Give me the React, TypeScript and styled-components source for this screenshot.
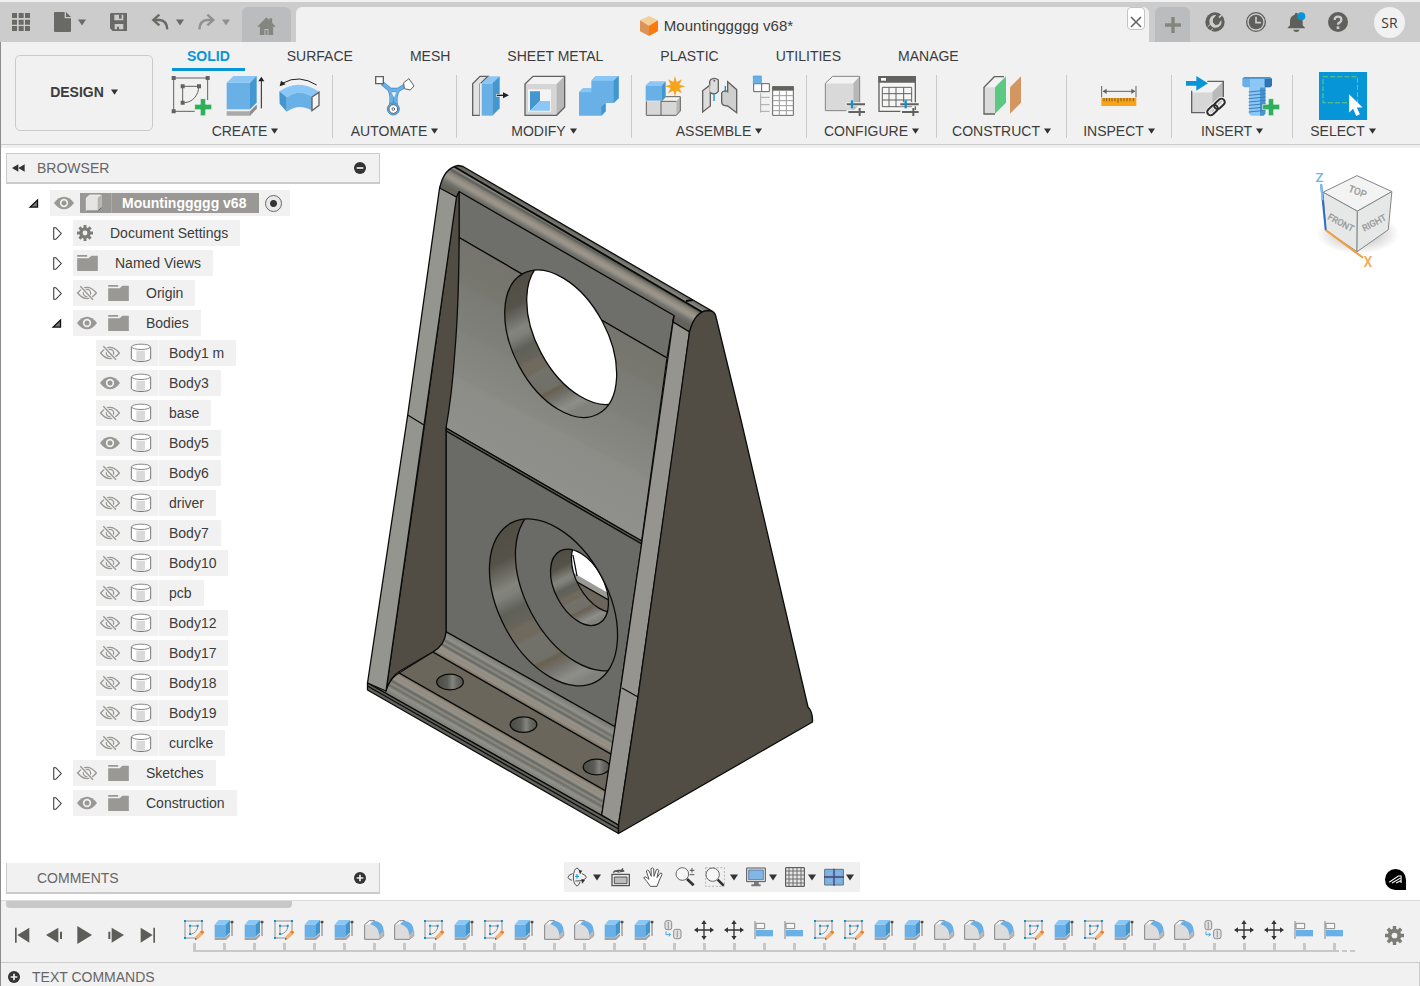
import React from "react";
import styled, { createGlobalStyle, css } from "styled-components";

const color = {
  chrome: "#f1f1f1",
  bar: "#cccccc",
  tab: "#bbbcbe",
  line: "#cbcbcb",
  icon: "#696965",
  text: "#3c3c3c",
  muted: "#666666",
  accent: "#0696d7",
  blue: "#69b0e6",
  blueTop: "#8ac6f6",
  blueSide: "#4297d1",
  edge: "#62625e",
};

const GlobalStyle = createGlobalStyle`
  * { box-sizing: border-box; }
  body {
    margin: 0;
    background: #ffffff;
    color: ${color.text};
    font: 14px/18px "Liberation Sans", Arial, sans-serif;
  }
  button { font: inherit; color: inherit; background: none; border: 0; padding: 0; margin: 0; cursor: pointer; }
  ul, ol { list-style: none; margin: 0; padding: 0; }
  svg { display: block; flex: none; overflow: visible; }
`;

/* ---------- layout ---------- */

const Page = styled.div`
  min-height: 100vh;
  display: flex;
  flex-direction: column;
`;

const TitleBar = styled.header`
  display: flex;
  align-items: flex-end;
  height: 42px;
  border-top: 2px solid ${color.chrome};
  background: ${color.bar};
`;

const QuickTools = styled.div`
  display: flex;
  align-items: center;
  align-self: stretch;
  gap: 24px;
  width: 242px;
  padding-left: 12px;
  color: ${color.icon};
`;

const History = styled.div`
  display: flex;
  gap: 14px;
`;

const ToolButton = styled.button<{ $dim?: boolean }>`
  display: flex;
  align-items: center;
  gap: 6px;
  opacity: ${(p) => (p.$dim ? 0.6 : 1)};
`;

const SideTab = styled.button<{ $width: number }>`
  display: flex;
  align-items: center;
  justify-content: center;
  flex: none;
  width: ${(p) => p.$width}px;
  height: 35px;
  border-radius: 6px 6px 0 0;
  background: ${color.tab};
  color: #85857f;
`;

const DocumentTab = styled.div`
  display: flex;
  flex: 1;
  height: 35px;
  margin: 0 6px 0 5px;
  padding: 0 4px 0 10px;
  border-radius: 6px 6px 0 0;
  background: ${color.chrome};
`;

const DocumentTitle = styled.h1`
  flex: 1;
  display: flex;
  align-items: center;
  justify-content: center;
  gap: 6px;
  margin: 0;
  padding-top: 3px;
  font-size: 15px;
  font-weight: 400;
`;

const CloseButton = styled.button`
  display: flex;
  align-items: flex-end;
  justify-content: center;
  width: 18px;
  height: 23px;
  border: 1px solid #c4c4c4;
  border-radius: 4px;
  background: #ffffff;
`;

const AccountTools = styled.div`
  display: flex;
  align-items: center;
  align-self: stretch;
  gap: 21px;
  padding: 0 15px;
  color: #5f5f5c;
`;

const Avatar = styled.button`
  width: 31px;
  height: 31px;
  margin-left: 5px;
  border-radius: 50%;
  background: ${color.chrome};
  color: ${color.text};
  font: 14px/31px "Open Sans", "Liberation Sans", sans-serif;
`;

const Workspace = styled.div`
  flex: 1;
  display: flex;
  flex-direction: column;
  border-left: 1px solid #8c8c8c;
`;

const Ribbon = styled.section`
  display: flex;
  gap: 5px;
  padding: 0 0 4px 14px;
  background: ${color.chrome};
  border-bottom: 1px solid ${color.line};
  box-shadow: 0 3px 0 ${color.chrome};
  margin-bottom: 3px;
`;

const WorkspaceButton = styled.button`
  display: flex;
  align-items: center;
  justify-content: center;
  gap: 7px;
  width: 138px;
  height: 76px;
  margin-top: 13px;
  padding-bottom: 2px;
  border: 1px solid #c9cacb;
  border-radius: 5px;
  font-weight: 700;
`;

const TabRow = styled.nav`
  display: flex;
  gap: 27px;
  padding-left: 14px;
  margin-bottom: 1px;
`;

const TabButton = styled.button<{ $active?: boolean }>`
  height: 29px;
  padding: 2px 15px 0;
  border-bottom: 3px solid ${(p) => (p.$active ? color.accent : "transparent")};
  color: ${(p) => (p.$active ? color.accent : color.text)};
  font-weight: ${(p) => (p.$active ? 700 : 400)};
`;

const Groups = styled.div`
  display: flex;
`;

const Group = styled.div<{ $width: number }>`
  display: flex;
  flex-direction: column;
  align-items: center;
  gap: 2px;
  width: ${(p) => p.$width}px;
`;

const CommandRow = styled.div`
  display: flex;
`;

const CommandButton = styled.button`
  display: flex;
  align-items: center;
  justify-content: center;
  width: 54px;
  height: 48px;
`;

const GroupMenu = styled.button`
  display: flex;
  align-items: center;
  gap: 4px;
`;

const Divider = styled.div`
  width: 1px;
  margin: 3px 0 2px;
  background: #c9c9c9;
`;

const Stage = styled.main`
  flex: 1;
  display: grid;
  grid-template: 1fr / 1fr;
  background: #ffffff;
  > * { grid-area: 1 / 1; }
`;

const Viewport = styled.div`
  padding: 16px 0 0 365px;
`;

const Sidebar = styled.aside`
  z-index: 1;
  display: flex;
  flex-direction: column;
  justify-content: space-between;
  justify-self: start;
  padding: 5px 0 6px 5px;
`;

const Panel = styled.section`
  width: 374px;
`;

const PanelHeader = styled.header<{ $open?: boolean }>`
  display: grid;
  grid-template-columns: 13px 1fr 13px;
  align-items: center;
  gap: 12px;
  height: 31px;
  padding: 0 12px 0 5px;
  border: solid ${color.line};
  border-width: ${(p) => (p.$open ? "1px 1px 2px" : "0 1px 2px")};
  background: ${color.chrome};
  color: ${color.muted};
  h2 { margin: 0; font-size: 14px; font-weight: 400; grid-column: 2; }
`;

const Tree = styled.ul`
  display: flex;
  flex-direction: column;
  gap: 4px;
  margin-top: 6px;
`;

const TreeRow = styled.li<{ $level: number }>`
  display: flex;
  align-items: center;
  height: 26px;
  padding-left: ${(p) => [21, 44, 67][p.$level]}px;
`;

const Toggle = styled.button`
  display: flex;
  justify-content: center;
  width: 14px;
  margin-right: 9px;
`;

const Spacer = styled.span`
  width: 23px;
`;

const Chip = styled.div<{ $tight?: boolean }>`
  display: flex;
  align-items: center;
  gap: 11px;
  height: 26px;
  padding: 0 12px 0 4px;
  background: ${color.chrome};
  ${(p) => p.$tight && css`gap: 6px; padding-right: 8px;`}
`;

const ChipLabel = styled.span<{ $inset: number }>`
  padding-left: ${(p) => p.$inset}px;
  white-space: nowrap;
`;

const BodyLabel = styled(ChipLabel)`
  margin-left: -4px;
  border-left: 1px solid #f9f9f9;
  line-height: 26px;
`;

const RootName = styled.div`
  display: flex;
  align-items: center;
  gap: 8px;
  height: 20px;
  padding: 0 13px 0 5px;
  background: #999894;
  color: #ffffff;
  font-weight: 700;
  span { padding-left: 10px; border-left: 1px solid #acaba8; line-height: 20px; }
`;

const Activate = styled.input`
  appearance: none;
  width: 17px;
  height: 17px;
  margin: 0;
  border: 1px solid #666666;
  border-radius: 50%;
  background: radial-gradient(circle, #333333 3px, #e8e8e8 4px);
`;

const NavBar = styled.div`
  z-index: 1;
  align-self: end;
  justify-self: center;
  display: flex;
  align-items: center;
  gap: 8px;
  height: 30px;
  margin: 0 0 8px 2px;
  padding: 0 6px 0 4px;
  background: #f0f0f0;
`;

const NavButton = styled.button<{ $menu?: number }>`
  display: flex;
  align-items: center;
  gap: ${(p) => p.$menu ?? 0}px;
  padding: 0 ${(p) => (p.$menu === undefined ? 2 : 0)}px;
`;

const CubeSlot = styled.div`
  z-index: 1;
  justify-self: end;
  align-self: start;
  padding: 19px 12px 0 0;
`;

const Assistant = styled.button`
  z-index: 1;
  justify-self: end;
  align-self: end;
  margin: 0 14px 10px 0;
`;

const Timeline = styled.section`
  height: 62px;
  border-top: 1px solid #dcdcdc;
  background: ${color.chrome};
`;

const ScrollThumb = styled.div`
  width: 286px;
  height: 7px;
  margin-left: 5px;
  border-radius: 0 0 4px 4px;
  background: #c8c8c8;
`;

const TimelineRow = styled.div`
  display: flex;
  align-items: center;
  height: 54px;
`;

const Playback = styled.div`
  display: flex;
  padding: 0 17px 0 6px;
`;

const PlayButton = styled.button`
  display: flex;
  justify-content: center;
  width: 31px;
`;

const Track = styled.div`
  align-self: flex-start;
  padding-top: 12px;
`;

const Features = styled.ol`
  display: flex;
`;

const Feature = styled.li`
  display: flex;
  flex-direction: column;
  align-items: center;
  gap: 3px;
  width: 30px;
  &::after { content: ""; width: 3px; height: 7px; background: #c8c8c8; }
`;

const Rail = styled.div`
  display: flex;
  gap: 3px;
  margin: 0 -6px 0 14px;
  span { width: 5px; height: 2px; background: #c8c8c8; }
  span:first-child { flex: 1; }
`;

const SettingsButton = styled.button`
  margin: 0 16px 0 auto;
`;

const TextCommands = styled.footer`
  display: flex;
  align-items: center;
  gap: 12px;
  height: 24px;
  padding: 5px 0 0 7px;
  border: solid ${color.line};
  border-width: 1px 1px 0 0;
  background: ${color.chrome};
  color: ${color.muted};
`;

/* ---------- shared drawing helpers ---------- */

type ArtProps = { box: string; size?: number; height?: number; children: React.ReactNode };
const Art = ({ box, size = 40, height, children }: ArtProps) => (
  <svg viewBox={box} width={size} height={height ?? size} fill="none" aria-hidden="true">
    {children}
  </svg>
);

const Caret = ({ w = 7, fill = "#333333" }: { w?: number; fill?: string }) => (
  <Art box="0 0 8 6" size={w} height={w - 1}><path d="M0 0H8L4 6Z" fill={fill} /></Art>
);

const Plus = ({ x, y }: { x: number; y: number }) => (
  <path d={`M${x + 17} ${y}h16v17h18v16h-18v18h-16v-18h-17v-16h17z`} fill="#2fae5b" stroke="#f1f1f1" strokeWidth="2" />
);

/* ---------- ribbon icons ---------- */

const SketchIcon = () => (
  <Art box="514 228 120 120">
    <path d="M522 234H624V300M522 234V334H585" stroke={color.edge} strokeWidth="3" />
    <path d="M549 308V259H597C597 285 580 306 555 308Z" stroke={color.edge} strokeWidth="3" />
    <path d="M516 228h12v12h-12zM618 228h12v12h-12zM516 328h12v12h-12zM543 253h12v12h-12zM592 253h12v12h-12zM543 302h12v12h-12z" fill={color.edge} />
    <Plus x={585} y={296} />
  </Art>
);

const ExtrudeIcon = () => (
  <Art box="676 228 120 120">
    <path d="M681 334H751L771 314V326L751 347H681Z" fill="#a9a9a9" />
    <path d="M751 334L771 314V326L751 347Z" fill="#8f8f8f" />
    <path d="M681 248H751V328H681Z" fill={color.blue} />
    <path d="M681 248L701 228H771L751 248Z" fill={color.blueTop} />
    <path d="M751 248L771 228V308L751 328Z" fill={color.blueSide} />
    <path d="M785 240V325" stroke="#222" strokeWidth="3" />
    <path d="M776 244L785 230L794 244Z" fill="#222" />
  </Art>
);

const RevolveIcon = () => (
  <Art box="838 228 120 120">
    <path d="M850 249Q898 222 951 255" stroke="#222" strokeWidth="3" />
    <path d="M840 259L844 242L858 253Z" fill="#222" />
    <path d="M839 274Q898 234 959 276L937 290Q898 265 861 292Z" fill={color.blueTop} />
    <path d="M861 292Q898 265 937 290V332Q898 308 861 335Z" fill={color.blue} />
    <path d="M839 274L861 292V335L840 311Z" fill={color.blueSide} />
    <path d="M937 291L958 277V316L937 332Z" fill="#f4f4f4" stroke={color.edge} strokeWidth="4" />
  </Art>
);

const AutomateIcon = () => (
  <Art box="1124 228 120 120">
    <path d="M1146 250L1170 270H1192L1216 256M1168 270C1176 285 1176 296 1172 316M1193 270C1184 285 1182 296 1187 316" stroke="#3f8fcb" strokeWidth="13" />
    <path d="M1146 250L1170 270H1192L1216 256M1168 270C1176 285 1176 296 1172 316M1193 270C1184 285 1182 296 1187 316" stroke={color.blue} strokeWidth="9" />
    <path d="M1174 277H1188L1181 293Z" fill="#f1f1f1" />
    <path d="M1126 230H1149V251H1126Z" fill="#fff" stroke={color.edge} strokeWidth="4" />
    <path d="M1226 236L1241 258L1230 270L1212 266L1210 248Z" fill="#fff" stroke={color.edge} strokeWidth="3" />
    <circle cx="1179" cy="327" r="18" fill={color.blue} stroke="#3f8fcb" strokeWidth="3" />
    <circle cx="1179" cy="327" r="13" fill="#fff" stroke={color.edge} strokeWidth="3" />
    <circle cx="1179" cy="327" r="4" stroke={color.edge} strokeWidth="3" />
  </Art>
);

const PressPullIcon = () => (
  <Art box="30 228 120 120">
    <path d="M38 346V251L60 229H84L60 252V346Z" fill="#e2e2e2" stroke={color.edge} strokeWidth="4" />
    <path d="M62 250V348" stroke="#f1f1f1" strokeWidth="5" />
    <path d="M65 250H97V347H65Z" fill={color.blue} />
    <path d="M65 250L87 229H119L97 250Z" fill={color.blueTop} />
    <path d="M97 250L119 229V325L97 347Z" fill={color.blueSide} />
    <path d="M108 286H130" stroke="#f1f1f1" strokeWidth="8" />
    <path d="M110 286H132" stroke="#222" strokeWidth="4" />
    <path d="M129 277L147 286L129 295Z" fill="#222" />
  </Art>
);

const ShellIcon = () => (
  <Art box="192 228 120 120">
    <path d="M195 252L219 229H314V322L290 346H195Z" fill="#d5d5d5" />
    <path d="M195 252L219 229H314L290 252Z" fill="#f2f2f2" />
    <path d="M290 252L314 229V322L290 346Z" fill="#b7b7b7" />
    <path d="M204 268H273V335H204Z" fill="#f4f4f4" />
    <path d="M210 274H240V303L210 332Z" fill={color.blueSide} />
    <path d="M240 303H270V332H210Z" fill={color.blueTop} />
    <path d="M195 252L219 229H314V322L290 346H195Z" stroke={color.edge} strokeWidth="4" />
  </Art>
);

const CombineIcon = () => (
  <Art box="354 228 120 120">
    <path d="M357 277L369 265H394V242L407 228H476V295L461 309H437V334L424 347H357Z" fill={color.blue} />
    <path d="M357 277L369 265H394V277ZM394 242L407 228H476L461 242Z" fill={color.blueTop} />
    <path d="M461 242L476 228V295L461 309ZM424 321L437 309V334L424 347Z" fill={color.blueSide} />
  </Art>
);

const NewComponentIcon = () => (
  <Art box="556 228 120 120">
    <path d="M560 304H650V346H560Z" fill="#d7d7d7" />
    <path d="M604 304L618 290H662L650 304Z" fill="#f2f2f2" />
    <path d="M650 304L662 290V333L650 346Z" fill="#b7b7b7" />
    <path d="M560 304V346H650L662 333V290H618L604 304V346M604 304H650" stroke={color.edge} strokeWidth="3" />
    <path d="M558 256H607V302H558Z" fill={color.blue} />
    <path d="M558 256L571 244H618L607 256Z" fill={color.blueTop} />
    <path d="M607 256L618 244V290L607 302Z" fill={color.blueSide} />
    <path d="M646 228L651 246L667 238L659 254L677 259L659 264L667 280L651 272L646 290L641 272L625 280L633 264L615 259L633 254L625 238L641 246Z" fill="#f8a41b" />
  </Art>
);

const JointIcon = () => (
  <Art box="717 228 120 120">
    <path d="M728 272L749 256V244C751 235 765 232 775 240V274C767 284 757 282 751 278V318L728 336Z" fill="#dcdcdc" stroke={color.edge} strokeWidth="4" />
    <path d="M749 254V280" stroke="#a9a9a9" strokeWidth="3" />
    <circle cx="763" cy="242" r="3" fill={color.edge} />
    <path d="M803 245L830 269V338L803 318C790 318 785 314 785 306V279C789 271 799 272 803 275Z" fill="#cfcfcf" stroke={color.edge} strokeWidth="4" />
    <path d="M762 281V303M796 258V277" stroke={color.accent} strokeWidth="4" />
  </Art>
);

const ComponentTableIcon = () => (
  <Art box="879 228 120 120">
    <path d="M881 251H928V275H881ZM905 251V275" fill="#fff" stroke={color.edge} strokeWidth="3" />
    <path d="M880 228H904V251H880Z" fill={color.blue} stroke={color.blueSide} strokeWidth="2" />
    <path d="M902 280V338M902 292H929M902 314H929M902 334H929" stroke="#a9a9a9" strokeWidth="3" />
    <path d="M938 260H1000V346H938Z" fill="#fff" stroke={color.edge} strokeWidth="3" />
    <path d="M937 259H1001V272H937Z" fill={color.edge} />
    <path d="M938 287H1000M938 302H1000M938 317H1000M938 332H1000M958 272V346M979 272V346" stroke="#9b9b9b" strokeWidth="3" />
  </Art>
);

const Sliders = ({ x, y }: { x: number; y: number }) => (
  <g>
    <path d={`M${x - 3} ${y}h58M${x} ${y + 23}h55`} stroke="#f1f1f1" strokeWidth="12" />
    <path d={`M${x} ${y}h55M${x + 5} ${y + 23}h50`} stroke={color.edge} strokeWidth="6" />
    <path d={`M${x + 16} ${y - 12}v24`} stroke={color.accent} strokeWidth="7" />
    <path d={`M${x + 39} ${y + 11}v24`} stroke={color.edge} strokeWidth="6" />
  </g>
);

const ConfigureIcon = () => (
  <Art box="1095 228 120 120">
    <path d="M1096 250H1180V332H1096Z" fill="#d9d9d9" />
    <path d="M1096 250L1118 229H1199L1180 250Z" fill="#f3f3f3" />
    <path d="M1180 250L1199 229V312L1180 332Z" fill="#b7b7b7" />
    <path d="M1096 332V250L1118 229H1199V308M1096 332H1160" stroke="#858585" strokeWidth="3" />
    <Sliders x={1160} y={313} />
  </Art>
);

const ConfigTableIcon = () => (
  <Art box="1257 228 120 120">
    <path d="M1257 230H1366V334H1257Z" fill="#f6f6f6" stroke={color.edge} strokeWidth="4" />
    <path d="M1255 228H1368V248H1255Z" fill={color.edge} />
    <path d="M1263 234H1278V242H1263Z" fill="#fff" />
    <path d="M1267 262H1355V320H1267ZM1267 281H1355M1267 300H1355M1287 262V320M1308 262V320M1331 262V320" stroke={color.edge} strokeWidth="3" />
    <Sliders x={1321} y={313} />
  </Art>
);

const ConstructIcon = () => (
  <Art box="156 228 120 120">
    <path d="M162 342V262L193 230H224L195 262V342Z" fill="#dadada" />
    <path d="M162 262L193 230H224L195 262Z" fill="#f2f2f2" />
    <path d="M195 342H162V262L193 230H222" stroke={color.edge} strokeWidth="4" />
    <path d="M195 262L228 229V308L195 341Z" fill="#5cc983" />
    <path d="M240 262L273 229V308L240 341Z" fill="#d49660" />
  </Art>
);

const MeasureIcon = () => (
  <Art box="509 228 120 120">
    <path d="M517 258V292M620 258V292M522 274H616" stroke={color.edge} strokeWidth="3" />
    <path d="M520 274L532 266V282ZM618 274L606 266V282Z" fill={color.edge} />
    <path d="M516 294H621V318H516Z" fill="#f8a41b" />
    <path d="M524 294v10M532 294v10M540 294v10M548 294v10M557 294v10M566 294v14M575 294v10M584 294v10M593 294v10M602 294v10M612 294v10" stroke="#7a5a1c" strokeWidth="3" />
  </Art>
);

const InsertDerivedIcon = () => (
  <Art box="765 228 120 120">
    <path d="M785 277H847V338H785Z" fill="#d7d7d7" />
    <path d="M785 277L818 244H880L847 277Z" fill="#f2f2f2" />
    <path d="M847 277L880 244V300L847 338Z" fill="#b9b9b9" />
    <path d="M785 272V338H825M832 244H880V292" stroke={color.edge} strokeWidth="4" />
    <path d="M768 243H799V228L834 250L799 272V257H768Z" fill={color.accent} />
    <g stroke="#f1f1f1" strokeWidth="12" transform="rotate(-42 858 321)">
      <rect x="826" y="311" width="36" height="20" rx="10" />
      <rect x="854" y="311" width="36" height="20" rx="10" />
    </g>
    <g stroke="#2d2d2d" strokeWidth="6" transform="rotate(-42 858 321)">
      <rect x="826" y="311" width="36" height="20" rx="10" />
      <rect x="854" y="311" width="36" height="20" rx="10" />
    </g>
  </Art>
);

const FastenerIcon = () => (
  <Art box="927 228 120 120">
    <path d="M957 262H1006V341L1000 347H963L957 341Z" fill={color.blueTop} />
    <path d="M990 262H1006V341L1000 347H990Z" fill={color.blueSide} />
    <path d="M956 276L1007 271M956 286L1007 281M956 296L1007 291M956 306L1007 301M956 316L1007 311M956 326L1007 321M956 336L1007 331" stroke="#3b7fbd" strokeWidth="3" />
    <path d="M937 236L943 231H1020L1026 236V257L1020 262H943L937 257Z" fill={color.blue} />
    <path d="M960 236H1004V262H960Z" fill={color.blueTop} />
    <path d="M1004 236H1026V257L1020 262H1004Z" fill="#2f73b4" />
    <path d="M937 236L943 231H1020L1026 236Z" fill="#4b93ce" />
    <Plus x={998} y={296} />
  </Art>
);

const SelectIcon = () => (
  <Art box="1166 216 142 142" size={48}>
    <path d="M1166 216H1308V358H1166Z" fill={color.accent} />
    <path d="M1178 230H1280V307H1178Z" stroke="#66c97b" strokeWidth="3" strokeDasharray="15 6" />
    <path d="M1255 282V336L1267 325L1276 346L1287 341L1278 321H1295Z" fill="#fff" />
  </Art>
);

/* ---------- title bar icons ---------- */

const GridIcon = () => (
  <Art box="0 0 54 54" size={18}>
    <path d="M0 0h15v15H0zM20 0h15v15H20zM39 0h15v15H39zM0 20h15v15H0zM20 20h15v15H20zM39 20h15v15H39zM0 39h15v15H0zM20 39h15v15H20zM39 39h15v15H39z" fill="currentColor" />
  </Art>
);
const FileIcon = () => (
  <Art box="0 0 54 60" size={18} height={20}>
    <path d="M3 0H32V19H51V57Q51 60 48 60H3Q0 60 0 57V3Q0 0 3 0ZM36 0L51 15H36Z" fill="currentColor" />
  </Art>
);
const SaveIcon = () => (
  <Art box="0 0 54 54" size={18}>
    <path fillRule="evenodd" d="M3 0H51V54H8L0 46V3ZM13 5V22H40V5ZM14 33V49H21V41H27V49H40V33Z" fill="currentColor" />
    <path d="M27 5H35V17H27Z" fill="currentColor" />
  </Art>
);
const UndoIcon = ({ flip }: { flip?: boolean }) => (
  <Art box="0 0 54 48" size={18} height={16}>
    <path d="M22 2L4 18L22 34M4 18H22Q44 19 46 46" stroke="currentColor" strokeWidth="7" transform={flip ? "matrix(-1 0 0 1 50 0)" : undefined} />
  </Art>
);
const HomeIcon = () => (
  <Art box="0 -4 56 54" size={19} height={18}>
    <path d="M28 0L37 9V3H45V17L56 28H48V53H34V35H22V53H8V28H0Z" fill="currentColor" />
    <path d="M25 38H31V53H25Z" fill="currentColor" />
  </Art>
);
const DocCube = () => (
  <Art box="0 0 54 60" size={18} height={20}>
    <path d="M27 0L54 13L27 29L0 13Z" fill="#f3cf98" />
    <path d="M0 13L27 29V60L0 46Z" fill="#dc9355" />
    <path d="M27 29L54 13V46L27 60Z" fill="#fb7a0b" />
  </Art>
);
const ExtensionsIcon = () => (
  <Art box="0 0 60 60" size={20}>
    <circle cx="30" cy="30" r="29" fill="currentColor" />
    <path d="M8 44L19 35M24 50L16 57" stroke="#ccc" strokeWidth="3" />
    <path d="M34 9Q18 8 14 22Q10 36 22 45Q36 52 47 40Q51 34 49 24L42 31Q38 41 29 36Q20 30 25 20Z" fill="#ccc" />
    <path d="M24 31L26 19L34 14L46 26L42 36L32 40Z" fill="currentColor" />
    <path d="M31 19L40 8M41 28L50 18" stroke="currentColor" strokeWidth="6" />
    <path d="M42 17L54 5" stroke="#ccc" strokeWidth="5" />
  </Art>
);
const ClockIcon = () => (
  <Art box="0 0 60 60" size={20}>
    <circle cx="30" cy="30" r="28" stroke="currentColor" strokeWidth="4" />
    <circle cx="30" cy="30" r="22" fill="currentColor" />
    <path d="M30 14V32H45" stroke="#ccc" strokeWidth="5" />
  </Art>
);
const BellIcon = () => (
  <Art box="0 0 60 60" size={20}>
    <path d="M28 2Q33 2 33 8Q47 12 47 28V40L54 47V49H2V47L9 40V28Q9 12 23 8Q23 2 28 2ZM18 53H38Q35 60 28 60Q21 60 18 53Z" fill="currentColor" />
    <circle cx="43" cy="13" r="12" fill="#0696d7" />
  </Art>
);
const HelpIcon = () => (
  <Art box="0 0 60 60" size={20}>
    <circle cx="30" cy="30" r="30" fill="currentColor" />
    <path d="M20 24Q20 14 30 14Q40 14 40 23Q40 29 34 32Q30 34 30 38" stroke="#ccc" strokeWidth="7" />
    <path d="M26 43H34V51H26Z" fill="#ccc" />
  </Art>
);

/* ---------- browser icons ---------- */

const EyeIcon = ({ off }: { off?: boolean }) =>
  off ? (
    <Art box="0 0 60 42" size={20} height={14}>
      <path d="M2 21Q16 4 30 4Q44 4 58 21Q44 38 30 38Q16 38 2 21Z" stroke="#999894" strokeWidth="4" />
      <circle cx="30" cy="21" r="11" stroke="#999894" strokeWidth="4" />
      <path d="M12 3L46 40" stroke="#f1f1f1" strokeWidth="10" />
      <path d="M10 1L48 41" stroke="#999894" strokeWidth="4" />
    </Art>
  ) : (
    <Art box="0 0 60 42" size={20} height={14}>
      <path d="M0 21Q14 2 30 2Q46 2 60 21Q46 40 30 40Q14 40 0 21Z" fill="#999894" />
      <circle cx="30" cy="21" r="10" stroke="#f1f1f1" strokeWidth="5" />
      <circle cx="30" cy="21" r="4" fill="#999894" />
    </Art>
  );
const FolderIcon = () => (
  <Art box="0 0 62 48" size={21} height={16}>
    <path d="M0 0H30V5H0ZM0 10H34L43 2H62V48H0Z" fill="#999894" />
  </Art>
);
const BodyIcon = () => (
  <Art box="0 2 60 56" size={20} height={19}>
    <path d="M1 10V46Q8 54 30 54Q52 54 59 46V10" fill="#fff" stroke="#777" strokeWidth="3" />
    <path d="M16 22H42V50Q28 54 16 50Z" fill="#dadada" />
    <ellipse cx="30" cy="10" rx="28" ry="8" fill="#fff" stroke="#888" strokeWidth="3" />
  </Art>
);
const ComponentIcon = () => (
  <Art box="0 0 54 54" size={18}>
    <path d="M4 12L14 3H48V42L38 51H4Z" fill="#e4e4e2" stroke="#fff" strokeWidth="2" />
    <path d="M38 12L48 3V42L38 51Z" fill="#b5b5b2" />
    <path d="M4 51H38L50 41" stroke="#63635f" strokeWidth="3" />
  </Art>
);
const GearIcon = ({ size = 16 }: { size?: number }) => (
  <Art box="0 0 60 60" size={size}>
    <path d="M30 0V60M0 30H60M9 9L51 51M51 9L9 51" stroke="#7d7d78" strokeWidth="11" />
    <circle cx="30" cy="30" r="15" stroke="#7d7d78" strokeWidth="13" />
    <circle cx="30" cy="30" r="9" fill="#f1f1f1" />
  </Art>
);
const Disclosure = ({ open }: { open?: boolean }) =>
  open ? (
    <Art box="0 0 30 28" size={10} height={9}><path d="M3 25H26V3Z" fill="#777" stroke="#111" strokeWidth="4" /></Art>
  ) : (
    <Art box="0 0 26 38" size={9} height={13}><path d="M2 2V36H8L24 19L8 2Z" fill="#fff" stroke="#333" strokeWidth="3" /></Art>
  );
const RoundIcon = ({ minus }: { minus?: boolean }) => (
  <Art box="0 0 36 36" size={12}>
    <circle cx="18" cy="18" r="18" fill="#333333" />
    <path d={minus ? "M8 18H28" : "M8 18H28M18 8V28"} stroke="#f1f1f1" strokeWidth="5" />
  </Art>
);

/* ---------- timeline icons ---------- */

const TimelineArt: Record<string, React.ReactNode> = {
  sketch: (
    <>
      <path d="M3 3H54V30M3 3V54H33" stroke="#8d9194" strokeWidth="3" />
      <path d="M18 18H42Q40 38 18 44Z" stroke="#8d9194" strokeWidth="3" />
      <path d="M0 0h6v6H0zM51 0h6v6h-6zM0 51h6v6H0zM15 14h6v6h-6zM38 14h6v6h-6zM15 39h6v6h-6z" fill={color.accent} />
      <path d="M34 50L50 34L58 42L42 57L33 59Z" fill="#f0b276" />
      <path d="M48 35L54 30L61 37L56 43Z" fill="#f47a1f" />
      <path d="M33 59L34 53L39 58Z" fill="#444" />
    </>
  ),
  extrude: (
    <>
      <path d="M2 52H35L48 40V48L36 60H2Z" fill="#a3a3a3" />
      <path d="M2 14H34V51H2Z" fill={color.blue} />
      <path d="M2 14L14 0H48L34 14Z" fill={color.blueTop} />
      <path d="M34 14L48 0V37L34 51Z" fill={color.blueSide} />
      <path d="M54 6V48" stroke="#777" strokeWidth="3" />
      <path d="M49 6h10M54 2v8" stroke="#222" strokeWidth="3" />
    </>
  ),
  fillet: (
    <>
      <path d="M2 58V14L16 2H32Q58 6 59 34V48L46 58Z" fill="#dcdcdc" />
      <path d="M2 14L16 2H32L20 12Z" fill="#f8f8f8" />
      <path d="M18 2H32Q58 6 59 32L46 46Q44 18 18 12L30 2Z" fill={color.blue} />
      <path d="M2 58V14L16 2H32M46 58H2M46 58L59 48V34" stroke="#858585" strokeWidth="3" />
      <path d="M46 46L59 34V48L46 58Z" fill="#b8b8b8" />
    </>
  ),
  joint: (
    <>
      <rect x="3" y="2" width="20" height="27" rx="6" fill="#e2e2e2" stroke="#8b8b8b" strokeWidth="3" />
      <rect x="29" y="28" width="22" height="28" rx="6" fill="#e2e2e2" stroke="#8b8b8b" strokeWidth="3" />
      <path d="M13 6V26M40 32V52" stroke="#a5a5a5" strokeWidth="4" />
      <path d="M6 34V44H18M14 39L20 44L14 49" stroke="#4aa3e0" strokeWidth="3" />
    </>
  ),
  move: (
    <>
      <path d="M30 8V52M8 30H52" stroke="#333" strokeWidth="4" />
      <path d="M30 0L38 12H22ZM30 60L38 48H22ZM0 30L12 22V38ZM60 30L48 22V38Z" fill="#333" />
    </>
  ),
  align: (
    <>
      <path d="M3 3V57" stroke="#a0a0a0" strokeWidth="4" />
      <path d="M6 10H32V26H6Z" fill="#f6f6f6" stroke="#888" strokeWidth="3" />
      <path d="M6 30H57V49H6Z" fill={color.blue} />
    </>
  ),
};

const features = (
  "sketch extrude extrude sketch extrude extrude fillet fillet sketch extrude sketch extrude fillet fillet " +
  "extrude extrude joint move move align align sketch sketch extrude extrude fillet fillet fillet sketch " +
  "extrude sketch extrude fillet fillet joint move move align align"
).split(" ");

const playback: [string, string][] = [
  ["Go to start", "M3 8H8V53H3ZM46 8V53L10 30Z"],
  ["Step back", "M40 8V53L3 30ZM45 20H51V42H45Z"],
  ["Play", "M4 3V57L48 30Z"],
  ["Step forward", "M14 8V53L51 30ZM4 20H10V42H4Z"],
  ["Go to end", "M8 8V53L44 30ZM46 8H51V53H46Z"],
];

/* ---------- view controls ---------- */

const navItems: { label: string; menu?: number; art: React.ReactNode }[] = [
  {
    label: "Orbit", menu: 5,
    art: (
      <>
        <path d="M36 44Q33 56 27 57Q16 52 16 30Q17 6 27 3Q36 6 38 20" stroke="#555" strokeWidth="3" />
        <path d="M14 20Q0 24 0 31Q2 38 12 40M22 42Q50 42 55 31Q54 24 42 20" stroke="#555" strokeWidth="3" />
        <path d="M27 21V35M21 28H33" stroke={color.accent} strokeWidth="3" />
        <path d="M32 9L43 11L36 21ZM40 36L51 40L42 50Z" fill="#333" />
      </>
    ),
  },
  {
    label: "Look at",
    art: (
      <>
        <path d="M3 22H55V56H3Z" fill="#eee" stroke="#555" strokeWidth="4" />
        <path d="M10 30H48V50H10Z" fill="#bcbcbc" stroke="#555" strokeWidth="3" />
        <path d="M6 16L20 10H38M10 11L24 15M36 4L28 14L40 12" stroke="#555" strokeWidth="4" />
      </>
    ),
  },
  {
    label: "Pan",
    art: (
      <path d="M22 58L12 44L2 32Q6 26 14 34L18 37L10 12Q14 6 18 12L25 28L24 5Q28 0 32 5L33 28L40 8Q45 4 47 10L42 32L51 19Q57 16 57 22L48 42L42 58Z" fill="#fff" stroke="#555" strokeWidth="3" strokeLinejoin="round" />
    ),
  },
  {
    label: "Zoom",
    art: (
      <>
        <circle cx="22" cy="21" r="19" fill="#f6f6f6" stroke="#666" strokeWidth="3" />
        <path d="M36 36L56 55" stroke="#333" strokeWidth="8" />
        <path d="M44 10H58M51 3V17M44 23H58" stroke="#555" strokeWidth="3" />
      </>
    ),
  },
  {
    label: "Fit", menu: 5,
    art: (
      <>
        <path d="M2 2H58V58H2Z" stroke="#b5b5b5" strokeWidth="3" strokeDasharray="6 5" />
        <circle cx="23" cy="23" r="20" fill="#f6f6f6" stroke="#666" strokeWidth="3" />
        <path d="M38 38L56 56" stroke="#333" strokeWidth="8" />
      </>
    ),
  },
  {
    label: "Display settings", menu: 3,
    art: (
      <>
        <path d="M2 3H58V44H2Z" fill="#e4e4e4" stroke="#555" strokeWidth="3" />
        <path d="M8 9H52V38H8Z" fill="#82b6e4" stroke="#475d8f" strokeWidth="2" />
        <path d="M24 45H38V52H44V58H16V52H24Z" fill="#777" />
      </>
    ),
  },
  {
    label: "Grid and snaps", menu: 3,
    art: (
      <>
        <path d="M2 2H58V58H2Z" fill="#e7e7e7" stroke="#444" strokeWidth="3" />
        <path d="M12 2V58M24 2V58M36 2V58M48 2V58M2 12H58M2 24H58M2 36H58M2 48H58" stroke="#6c6c6c" strokeWidth="3" />
      </>
    ),
  },
  {
    label: "Viewports", menu: 2,
    art: (
      <>
        <path d="M2 7H58V54H2Z" fill="#82b6e4" stroke="#5f6e76" strokeWidth="3" />
        <path d="M8 13H26V26H8ZM34 13H52V26H34ZM8 35H26V48H8ZM34 35H52V48H34Z" stroke="#6fa9dc" strokeWidth="2" />
        <path d="M30 5V56M0 30H60" stroke="#473f72" strokeWidth="4" />
      </>
    ),
  },
];

/* ---------- data ---------- */

const tabs = ["SOLID", "SURFACE", "MESH", "SHEET METAL", "PLASTIC", "UTILITIES", "MANAGE"];

const groups: { name: string; width: number; icons: [string, React.FC][] }[] = [
  { name: "CREATE", width: 174, icons: [["Create sketch", SketchIcon], ["Extrude", ExtrudeIcon], ["Revolve", RevolveIcon]] },
  { name: "AUTOMATE", width: 123, icons: [["Automated modeling", AutomateIcon]] },
  { name: "MODIFY", width: 174, icons: [["Press pull", PressPullIcon], ["Shell", ShellIcon], ["Combine", CombineIcon]] },
  { name: "ASSEMBLE", width: 174, icons: [["New component", NewComponentIcon], ["Joint", JointIcon], ["Bill of materials", ComponentTableIcon]] },
  { name: "CONFIGURE", width: 129, icons: [["Configure", ConfigureIcon], ["Configuration table", ConfigTableIcon]] },
  { name: "CONSTRUCT", width: 129, icons: [["Offset plane", ConstructIcon]] },
  { name: "INSPECT", width: 104, icons: [["Measure", MeasureIcon]] },
  { name: "INSERT", width: 120, icons: [["Insert derive", InsertDerivedIcon], ["Insert fastener", FastenerIcon]] },
  { name: "SELECT", width: 100, icons: [["Select", SelectIcon]] },
];

const bodies: [string, boolean][] = [
  ["Body1 m", false], ["Body3", true], ["base", false], ["Body5", true], ["Body6", false], ["driver", false],
  ["Body7", false], ["Body10", false], ["pcb", false], ["Body12", false], ["Body17", false], ["Body18", false],
  ["Body19", false], ["curclke", false],
];

/* ---------- model ---------- */

const Stops = ({ list }: { list: [number, string][] }) => (
  <>{list.map(([o, c]) => <stop key={o} offset={o} stopColor={c} />)}</>
);

const wall: [number, string][] = [
  [0, "#4f4b43"], [0.24, "#55524a"], [0.38, "#83847d"], [0.42, "#7f807a"], [0.5, "#5f6058"], [0.58, "#66645b"],
  [0.6, "#70695d"], [0.66, "#70695d"], [0.68, "#72716a"], [0.8, "#706f68"], [0.82, "#69614f"], [0.87, "#72706a"], [0.95, "#8f8f8a"], [1, "#82827c"],
];
const fillet: [number, string][] = [
  [0, "#77766f"], [0.12, "#9a9080"], [0.22, "#918c84"], [0.32, "#94948f"], [0.42, "#66665c"], [0.52, "#8c8c86"],
  [0.62, "#6e6e67"], [0.74, "#92928d"], [1, "#777872"],
];

type RingProps = { x: number; y: number; rx: number; ry: number; fill?: string };
const Ring = ({ x, y, rx, ry, fill = "none" }: RingProps) => (
  <ellipse cx={x} cy={y} rx={rx} ry={ry} transform={`rotate(62 ${x} ${y})`} fill={fill} />
);

const upper = { x: 560.7, y: 343.7, rx: 79.6, ry: 47.2 };
const lower = { x: 553.5, y: 602.4, rx: 90, ry: 54.5 };
const small = { x: 579.5, y: 587.3, rx: 41.2, ry: 24.5 };

const Model = () => (
  <svg viewBox="366 164 450 672" width="450" height="672" role="img" aria-label="Mounting bracket">
    <defs>
      <linearGradient id="wallUpper" gradientUnits="userSpaceOnUse" x1="520" y1="260" x2="593" y2="402"><Stops list={wall} /></linearGradient>
      <linearGradient id="wallLower" gradientUnits="userSpaceOnUse" x1="505" y1="508" x2="592" y2="676"><Stops list={wall} /></linearGradient>
      <linearGradient id="wallSmall" gradientUnits="userSpaceOnUse" x1="560" y1="545" x2="597" y2="620"><Stops list={wall} /></linearGradient>
      <linearGradient id="panel" gradientUnits="userSpaceOnUse" x1="560" y1="296" x2="482" y2="444">
        <Stops list={[[0, "#75746d"], [0.2, "#79786f"], [0.23, "#7a7b74"], [0.45, "#7f8079"], [0.48, "#82837c"], [0.7, "#888982"], [0.73, "#8c8d87"], [1, "#8f908b"]]} />
      </linearGradient>
      <linearGradient id="roll" gradientUnits="userSpaceOnUse" x1="590" y1="241" x2="578" y2="262">
        <Stops list={[[0, "#66665f"], [0.2, "#8b8b85"], [0.28, "#5c5c55"], [0.4, "#84837c"], [0.55, "#a09585"], [0.66, "#93918c"], [0.8, "#73736c"], [1, "#62625b"]]} />
      </linearGradient>
      <linearGradient id="filletFront" gradientUnits="userSpaceOnUse" x1="500" y1="731" x2="488" y2="752"><Stops list={fillet} /></linearGradient>
      <linearGradient id="filletBack" gradientUnits="userSpaceOnUse" x1="508" y1="694" x2="520" y2="673"><Stops list={fillet} /></linearGradient>
      <linearGradient id="bore" x1="0" x2="1" y1="0" y2="0"><Stops list={[[0, "#4b4b46"], [0.4, "#5c5c56"], [0.6, "#84847e"], [0.75, "#6b6b64"], [1, "#54544e"]]} /></linearGradient>
      <clipPath id="clipUpper"><ellipse cx="560.7" cy="343.7" rx="79.6" ry="47.2" transform="rotate(62 560.7 343.7)" /></clipPath>
      <clipPath id="clipLower"><ellipse cx="553.5" cy="602.4" rx="90" ry="54.5" transform="rotate(62 553.5 602.4)" /></clipPath>
      <clipPath id="clipSmall"><ellipse cx="579.5" cy="587.3" rx="41.2" ry="24.5" transform="rotate(62 579.5 587.3)" /></clipPath>
      <clipPath id="clipSmallBack"><ellipse cx="600.5" cy="574.3" rx="41.2" ry="24.5" transform="rotate(62 600.5 574.3)" /></clipPath>
    </defs>

    <g stroke="#0b0b0a" strokeWidth="1.3" strokeLinejoin="round">
      <path d="M459 191L674 315L667 358L459 237.5Z" fill="#6e6f6a" />
      <path d="M459 237.5L667 358L641.7 541L446 428Z" fill="url(#panel)" />
      <path d="M446 428L641.7 541V544L446 431Z" fill="#5a5a55" />
      <path d="M446 431L641.7 544L615 727L446 631.7Z" fill="#6a6b66" />
      <path d="M446 631.7L615.5 727L611.5 754.5L432.7 652Q444 645 446 631.7Z" fill="url(#filletBack)" />
      <path d="M432.7 652L611.5 754.5L605.7 791L399 673Z" fill="#6b665b" />
      <path d="M399 673L605.7 791L601.7 815L618.5 825L367.5 683L386 690Q390 678 399 673Z" fill="url(#filletFront)" />

      <g fill="url(#bore)">
        <ellipse cx="450" cy="682" rx="13.3" ry="7.8" />
        <ellipse cx="523.5" cy="724.6" rx="13.3" ry="7.8" />
        <ellipse cx="596.5" cy="767" rx="13.3" ry="7.8" />
      </g>

      <g clipPath="url(#clipUpper)">
        <path d="M500 265H620V422H500Z" fill="url(#wallUpper)" stroke="none" />
        <Ring {...upper} x={582.7} y={330.7} fill="#fff" />
      </g>
      <Ring {...upper} />

      <g clipPath="url(#clipLower)">
        <path d="M485 515H622V690H485Z" fill="url(#wallLower)" stroke="none" />
        <Ring {...lower} x={579.5} y={587.4} fill="#6a6b66" />
        <g clipPath="url(#clipSmall)">
          <path d="M548 545H612V628H548Z" fill="url(#wallSmall)" stroke="none" />
          <g clipPath="url(#clipSmallBack)">
            <path d="M565 540H625V640H565Z" fill="#fff" stroke="none" />
            <path d="M565 568L620 600V640H565Z" fill="#9b9b96" stroke="none" />
            <path d="M565 575L620 606.5V640H565Z" fill="#6b665b" />
            <path d="M573 555L577 576" />
          </g>
          <Ring {...small} x={600.5} y={574.3} />
        </g>
        <Ring {...small} />
      </g>
      <Ring {...lower} />

      <path d="M459 191Q460 290 455 350Q452 395 446 428V631.7Q445 645 432.7 652L400 671Q390 677 386 691L421 450L456 197Z" fill="#514d45" />
      <path d="M439.7 187L456.5 197L424 425L386 691L367.5 683L407.7 415Z" fill="#95958f" />
      <path d="M407.7 415L424 425" />

      <path d="M367.5 683L618.5 825V833.5L367.5 690Z" fill="#62625c" />
      <path d="M367.5 686L618.5 829" />

      <path d="M439.7 188Q444 168 458 165.5L463 166.5L712 311Q695 314 689.5 332L673 322L674 315.5L459 191.5L456.5 197Z" fill="url(#roll)" />
      <path d="M454 166.5L702 312" strokeWidth="2" />
      <path d="M686 301L693 300" strokeWidth="2" />

      <path d="M673 322L689.5 332L677.5 420L638 697L618.5 825L601.7 815L615 727L641.7 543Z" fill="#95948f" />
      <path d="M674 315.5L673 322M622 688L638 697" />
      <path d="M618.5 833.5V825L638 697L689.5 332C693 318 700 310.5 709 310.5Q715 311 716 317L741 420L808 707Q813 712 812.5 722Z" fill="#514d45" />
    </g>
  </svg>
);

const ViewCube = () => (
  <svg viewBox="70 50 285 310" width="95" height="103" role="img" aria-label="View cube">
    <defs>
      <radialGradient id="shade"><stop offset="0.5" stopColor="#bbb" /><stop offset="1" stopColor="#fff" /></radialGradient>
    </defs>
    <ellipse cx="205" cy="250" rx="125" ry="62" fill="url(#shade)" opacity="0.6" />
    <g stroke="#858585" strokeWidth="3" strokeLinejoin="round">
      <path d="M100 126L202 76L307 124L203 183Z" fill="#f3f3f3" />
      <path d="M100 126L203 183L202 305L108 240Z" fill="#e6e8e8" />
      <path d="M203 183L307 124L296 239L202 305Z" fill="#e6e8e8" />
    </g>
    <path d="M94 102L108 240" stroke="#2b6fce" strokeWidth="6" />
    <path d="M94 102L98 150" stroke="#7cc0ee" strokeWidth="6" />
    <path d="M108 240L220 323" stroke="#f0a040" strokeWidth="6" />
    <g fontFamily="Roboto, 'Liberation Sans', sans-serif" textAnchor="middle">
      <text x="89" y="95" fontSize="40" fontWeight="500" fill="#6fb7e8">Z</text>
      <text x="235" y="350" fontSize="42" fontWeight="500" fill="#f5a85c">X</text>
      <g fontSize="29" fill="#999" stroke="#999" strokeWidth="1">
        <text x="200" y="133" transform="rotate(22 200 133)">TOP</text>
        <text x="149" y="226" fontSize="27" transform="rotate(28 149 226)">FRONT</text>
        <text x="258" y="226" fontSize="27" transform="rotate(-28 258 226)">RIGHT</text>
      </g>
    </g>
  </svg>
);

/* ---------- page sections ---------- */

const FolderRow = ({ name, visible, open }: { name: string; visible: boolean; open?: boolean }) => (
  <TreeRow $level={1}>
    <Toggle aria-label={`Toggle ${name}`}><Disclosure open={open} /></Toggle>
    <Chip>
      <button aria-label={`Visibility of ${name}`}><EyeIcon off={!visible} /></button>
      <FolderIcon />
      <ChipLabel $inset={6}>{name}</ChipLabel>
    </Chip>
  </TreeRow>
);

const Browser = () => (
  <Panel>
    <PanelHeader $open>
      <button aria-label="Collapse browser">
        <Art box="0 0 39 24" size={13} height={8}><path d="M19 1V23L0 12ZM38 1V23L19 12Z" fill="#333" /></Art>
      </button>
      <h2>BROWSER</h2>
      <button aria-label="Hide browser"><RoundIcon minus /></button>
    </PanelHeader>
    <Tree>
      <TreeRow $level={0}>
        <Toggle aria-label="Toggle root"><Disclosure open /></Toggle>
        <Chip $tight>
          <button aria-label="Visibility of root"><EyeIcon /></button>
          <RootName><ComponentIcon /><span>Mountinggggg v68</span></RootName>
          <Activate type="radio" defaultChecked aria-label="Activate component" />
        </Chip>
      </TreeRow>
      <TreeRow $level={1}>
        <Toggle aria-label="Toggle Document Settings"><Disclosure /></Toggle>
        <Chip><GearIcon /><ChipLabel $inset={6}>Document Settings</ChipLabel></Chip>
      </TreeRow>
      <TreeRow $level={1}>
        <Toggle aria-label="Toggle Named Views"><Disclosure /></Toggle>
        <Chip><FolderIcon /><ChipLabel $inset={6}>Named Views</ChipLabel></Chip>
      </TreeRow>
      <FolderRow name="Origin" visible={false} />
      <FolderRow name="Bodies" visible open />
      {bodies.map(([name, visible]) => (
        <TreeRow $level={2} key={name}>
          <Spacer />
          <Chip>
            <button aria-label={`Visibility of ${name}`}><EyeIcon off={!visible} /></button>
            <BodyIcon />
            <BodyLabel $inset={10}>{name}</BodyLabel>
          </Chip>
        </TreeRow>
      ))}
      <FolderRow name="Sketches" visible={false} />
      <FolderRow name="Construction" visible />
    </Tree>
  </Panel>
);

export default function App() {
  return (
    <Page>
      <GlobalStyle />
      <TitleBar>
        <QuickTools>
          <ToolButton aria-label="Show data panel"><GridIcon /></ToolButton>
          <ToolButton aria-label="File"><FileIcon /><Caret w={8} fill={color.icon} /></ToolButton>
          <ToolButton aria-label="Save"><SaveIcon /></ToolButton>
          <History>
            <ToolButton aria-label="Undo"><UndoIcon /><Caret w={8} fill={color.icon} /></ToolButton>
            <ToolButton aria-label="Redo" $dim><UndoIcon flip /><Caret w={8} fill={color.icon} /></ToolButton>
          </History>
        </QuickTools>
        <SideTab $width={49} aria-label="Home"><HomeIcon /></SideTab>
        <DocumentTab>
          <DocumentTitle><DocCube />Mountinggggg v68*</DocumentTitle>
          <CloseButton aria-label="Close document">
            <Art box="0 0 36 36" size={12}><path d="M3 0L33 30M33 0L3 30" stroke="#666" strokeWidth="5" /></Art>
          </CloseButton>
        </DocumentTab>
        <SideTab $width={35} aria-label="New document">
          <Art box="0 0 48 48" size={16}><path d="M24 0V48M0 24H48" stroke="#85857f" strokeWidth="10" /></Art>
        </SideTab>
        <AccountTools>
          <ToolButton aria-label="Extensions"><ExtensionsIcon /></ToolButton>
          <ToolButton aria-label="Job status"><ClockIcon /></ToolButton>
          <ToolButton aria-label="Notifications"><BellIcon /></ToolButton>
          <ToolButton aria-label="Help"><HelpIcon /></ToolButton>
          <Avatar>SR</Avatar>
        </AccountTools>
      </TitleBar>

      <Workspace>
        <Ribbon>
          <WorkspaceButton>DESIGN <Caret /></WorkspaceButton>
          <div>
            <TabRow>
              {tabs.map((t, i) => <TabButton key={t} $active={i === 0}>{t}</TabButton>)}
            </TabRow>
            <Groups>
              {groups.map((g, i) => (
                <React.Fragment key={g.name}>
                  {i > 0 && <Divider />}
                  <Group $width={g.width}>
                    <CommandRow>
                      {g.icons.map(([label, Icon]) => (
                        <CommandButton key={label} aria-label={label}><Icon /></CommandButton>
                      ))}
                    </CommandRow>
                    <GroupMenu>{g.name}<Caret /></GroupMenu>
                  </Group>
                </React.Fragment>
              ))}
            </Groups>
          </div>
        </Ribbon>

        <Stage>
          <Viewport><Model /></Viewport>
          <Sidebar>
            <Browser />
            <Panel>
              <PanelHeader>
                <h2>COMMENTS</h2>
                <button aria-label="Show comments"><RoundIcon /></button>
              </PanelHeader>
            </Panel>
          </Sidebar>
          <CubeSlot><ViewCube /></CubeSlot>
          <NavBar>
            {navItems.map((n) => (
              <NavButton key={n.label} aria-label={n.label} $menu={n.menu}>
                <Art box="0 0 60 60" size={20}>{n.art}</Art>
                {n.menu !== undefined && <Caret w={8} />}
              </NavButton>
            ))}
          </NavBar>
          <Assistant aria-label="Assistant">
            <Art box="0 0 60 60" size={21}>
              <path d="M30 0A30 30 0 0 1 60 30V60H30A30 30 0 0 1 30 0Z" fill="#000" />
              <path d="M12 38L38 20H46V40M20 40L44 26M32 40L46 33" stroke="#fff" strokeWidth="3" />
            </Art>
          </Assistant>
        </Stage>

        <Timeline>
          <ScrollThumb />
          <TimelineRow>
            <Playback>
              {playback.map(([label, d]) => (
                <PlayButton key={label} aria-label={label}>
                  <Art box="0 0 54 60" size={18} height={20}><path d={d} fill="#5c5c59" /></Art>
                </PlayButton>
              ))}
            </Playback>
            <Track>
              <Features>
                {features.map((f, i) => (
                  <Feature key={i}><Art box="0 0 60 60" size={20}>{TimelineArt[f]}</Art></Feature>
                ))}
              </Features>
              <Rail><span /><span /><span /></Rail>
            </Track>
            <SettingsButton aria-label="Timeline settings"><GearIcon size={19} /></SettingsButton>
          </TimelineRow>
        </Timeline>
        <TextCommands>
          <button aria-label="Show text commands"><RoundIcon /></button>
          TEXT COMMANDS
        </TextCommands>
      </Workspace>
    </Page>
  );
}
